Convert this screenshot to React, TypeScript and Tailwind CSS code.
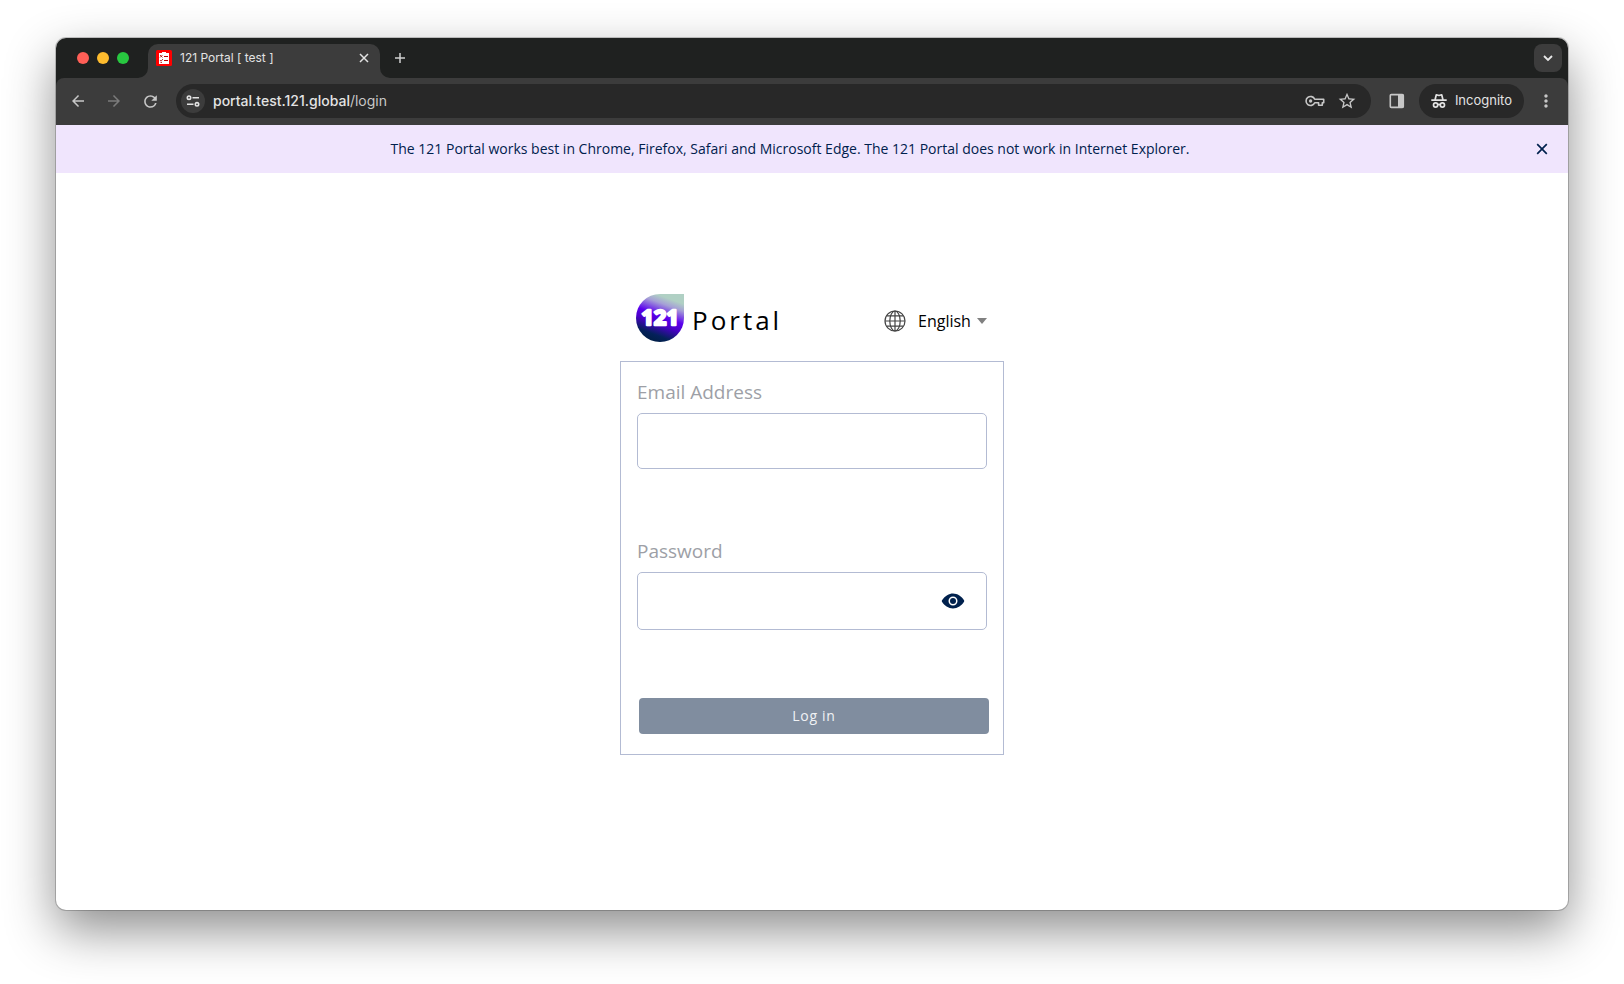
import { useState } from "react";
import { IoEye } from "react-icons/io5";
import { MdArrowBack, MdArrowForward, MdRefresh, MdMoreVert, MdStarBorder } from "react-icons/md";

function CrossIcon({ className }: { className: string }) {
  return (
    <svg viewBox="0 0 10 10" className={className} fill="none" stroke="currentColor" aria-hidden="true">
      <path d="M1 1l8 8M9 1l-8 8" />
    </svg>
  );
}

function FavIcon() {
  return (
    <svg viewBox="0 0 16 16" className="size-4 shrink-0" aria-hidden="true">
      <rect width="16" height="16" rx="1.500" fill="#f00" />
      <path d="M3 3h3V2h4v1h3v11H3z" fill="#fff" />
      <path d="M8 6.500h4M8 10.500h4" stroke="#b00" strokeWidth="1" />
      <path d="M4 5l2.500 2.500M6.500 5L4 7.500M4 10l1 1.200L7 9M4.500 12.500h1.500" stroke="#a00" strokeWidth="0.800" fill="none" />
    </svg>
  );
}

function TuneIcon() {
  return (
    <svg viewBox="0 0 14 12" className="h-3 w-3.5" fill="none" stroke="currentColor" strokeWidth="1.6" aria-hidden="true">
      <circle cx="3" cy="2.700" r="1.700" />
      <path d="M6.500 2.700H13M1 9.300h6.500" />
      <circle cx="11" cy="9.300" r="1.700" />
    </svg>
  );
}

function KeyIcon() {
  return (
    <svg viewBox="0 0 20 12" className="h-3 w-5" fill="none" stroke="currentColor" strokeWidth="1.6" aria-hidden="true">
      <path d="M9.700 4.200H18.700V7.800H17.300V10.200H13.600V7.800H9.700A4.500 4.500 0 1 1 9.700 4.200z" strokeLinejoin="round" />
      <circle cx="5.600" cy="6" r="1.700" fill="currentColor" stroke="none" />
    </svg>
  );
}

function PanelIcon() {
  return (
    <svg viewBox="0 0 16 16" className="size-4" aria-hidden="true">
      <rect x="1.300" y="1.600" width="13" height="12.800" rx="1" fill="none" stroke="currentColor" strokeWidth="1.6" />
      <path d="M9 1.600h5.500v12.800H9z" fill="currentColor" />
    </svg>
  );
}

function IncognitoIcon() {
  return (
    <svg viewBox="0 0 16 16" className="size-4" fill="none" stroke="currentColor" strokeWidth="1.700" aria-hidden="true">
      <path d="M0.300 7.100h15.400" />
      <path d="M4 7L5.300 1.800L8 2.500L10.700 1.800L12 7" strokeLinejoin="round" />
      <circle cx="4.600" cy="12" r="2.100" />
      <circle cx="11.400" cy="12" r="2.100" />
      <path d="M6.600 11.800q1.400-.8 2.800 0" />
    </svg>
  );
}

function GlobeIcon() {
  return (
    <svg viewBox="0 0 22 22" className="size-[22px]" fill="none" stroke="#444" strokeWidth="1.200" aria-hidden="true">
      <circle cx="11" cy="11" r="10" />
      <ellipse cx="11" cy="11" rx="5.200" ry="10" />
      <path d="M11 1v20M1 11h20M2.700 5.800h16.600M2.700 16.200h16.600" />
    </svg>
  );
}

function Logo() {
  return (
    <svg viewBox="0 0 48 48" className="size-12 shrink-0" role="img" aria-label="121">
      <defs>
        <linearGradient id="drop" x1="0.72" y1="0.02" x2="0.36" y2="1">
          <stop offset="0.08" stopColor="#b0d0c4" />
          <stop offset="0.22" stopColor="#a59fd6" />
          <stop offset="0.46" stopColor="#5b00ee" />
          <stop offset="0.62" stopColor="#4a00c8" />
          <stop offset="0.85" stopColor="#04215a" />
          <stop offset="1" stopColor="#001e45" />
        </linearGradient>
      </defs>
      <path d="M24 0H48V24A24 24 0 1 1 24 0z" fill="url(#drop)" />
      <text
        x="24"
        y="31"
        textAnchor="middle"
        fill="#fff"
        stroke="#fff"
        strokeWidth="2.400"
        strokeLinejoin="round"
        className="font-['Open_Sans',sans-serif] text-[22px] font-bold"
      >
        121
      </text>
    </svg>
  );
}

function TabStrip() {
  return (
    <div className="flex h-10 items-end bg-[#1f2120] pr-1.5 pl-[21px]">
      <div className="flex h-10 items-center gap-2">
        <span className="size-3 rounded-full bg-[#ff5f57]" />
        <span className="size-3 rounded-full bg-[#febc2e]" />
        <span className="size-3 rounded-full bg-[#28c840]" />
      </div>
      <svg viewBox="0 0 10 10" className="ml-[9px] size-2.5" aria-hidden="true">
        <path d="M10 0V10H0A10 10 0 0 0 10 0z" fill="#3c3c3c" />
      </svg>
      <div className="flex h-[34px] w-[232px] items-center rounded-t-[10px] bg-[#3c3c3c] pr-2 pb-1.5 pl-2">
        <FavIcon />
        <span className="ml-2 flex-1 text-xs text-[#e3e3e3]">121 Portal [ test ]</span>
        <button type="button" aria-label="Close tab" className="flex size-4 items-center justify-center text-[#e3e3e3]">
          <CrossIcon className="size-2.5 stroke-[1.500]" />
        </button>
      </div>
      <svg viewBox="0 0 10 10" className="size-2.5" aria-hidden="true">
        <path d="M0 0V10H10A10 10 0 0 1 0 0z" fill="#3c3c3c" />
      </svg>
      <button type="button" aria-label="New tab" className="flex h-10 w-5 items-center justify-center text-[#d0d0d0]">
        <svg viewBox="0 0 10 10" className="size-2.5" fill="none" stroke="currentColor" strokeWidth="1.500" aria-hidden="true">
          <path d="M5 0v10M0 5h10" />
        </svg>
      </button>
      <button
        type="button"
        aria-label="Search tabs"
        className="mb-1.5 ml-auto flex size-7 items-center justify-center rounded-lg bg-[#3c3c3c] text-[#e8e8e8]"
      >
        <svg viewBox="0 0 10 10" className="size-2.5" fill="none" stroke="currentColor" strokeWidth="1.800" aria-hidden="true">
          <path d="M1 3l4 4 4-4" />
        </svg>
      </button>
    </div>
  );
}

function Toolbar() {
  return (
    <div className="bg-[#1f2120]">
      <div className="flex h-[47px] items-center rounded-t-lg bg-[#3c3c3c] pr-3 pb-px pl-[13px] text-[#c7c7c7]">
        <div className="flex items-center gap-[18px]">
          <button type="button" aria-label="Back">
            <MdArrowBack className="size-[18px]" />
          </button>
          <button type="button" aria-label="Forward" className="text-[#7b7b7b]">
            <MdArrowForward className="size-[18px]" />
          </button>
          <button type="button" aria-label="Reload">
            <MdRefresh className="size-[19px]" />
          </button>
        </div>
        <div className="ml-4 flex h-[34px] flex-1 items-center rounded-full bg-[#282828] pr-3.5 pl-[5px]">
          <button
            type="button"
            aria-label="Site information"
            className="flex size-6 items-center justify-center rounded-full bg-[#3c3c3c] text-[#e3e3e3]"
          >
            <TuneIcon />
          </button>
          <span className="ml-2 flex-1 text-sm text-[#c7c7c7]">
            <span className="font-medium text-[#e3e3e3]">portal.test.121.global</span>/login
          </span>
          <button type="button" aria-label="Passwords">
            <KeyIcon />
          </button>
          <button type="button" aria-label="Bookmark" className="ml-3">
            <MdStarBorder className="size-5" />
          </button>
        </div>
        <button type="button" aria-label="Side panel" className="ml-[18px]">
          <PanelIcon />
        </button>
        <button
          type="button"
          className="ml-3.5 flex h-[34px] items-center gap-2 rounded-full bg-[#282828] px-3 text-[13px] text-[#e3e3e3]"
        >
          <IncognitoIcon />
          Incognito
        </button>
        <button type="button" aria-label="Menu" className="ml-3">
          <MdMoreVert className="size-5" />
        </button>
      </div>
    </div>
  );
}

function Banner({ onClose }: { onClose: () => void }) {
  return (
    <div className="flex min-h-12 items-center bg-[#f0e5fd] pr-4 text-[#00214d]">
      <p className="flex-1 pr-2 text-center text-sm">
        The 121 Portal works best in Chrome, Firefox, Safari and Microsoft Edge. The 121 Portal does not work in Internet
        Explorer.
      </p>
      <button type="button" aria-label="Close message" onClick={onClose} className="flex h-8 w-5 items-center justify-center">
        <CrossIcon className="size-3 stroke-[1.400]" />
      </button>
    </div>
  );
}

function LoginForm() {
  const [visible, setVisible] = useState(false);
  return (
    <form
      onSubmit={(event) => event.preventDefault()}
      className="flex flex-col border border-[#b3bbd3] px-4 pt-4 pb-5"
    >
      <label htmlFor="email" className="text-[19px] leading-7 text-[#9d9fa6]">
        Email Address
      </label>
      <input
        id="email"
        type="email"
        className="mt-[7px] h-14 rounded-[5px] border border-[#b3bbd3] px-4 outline-none"
      />
      <label htmlFor="password" className="mt-[68px] text-[19px] leading-7 text-[#9d9fa6]">
        Password
      </label>
      <div className="mt-[7px] flex h-[58px] items-center rounded-[5px] border border-[#b3bbd3] pr-[21px]">
        <input
          id="password"
          type={visible ? "text" : "password"}
          className="h-full min-w-0 flex-1 bg-transparent px-4 outline-none"
        />
        <button type="button" aria-label="Show password" onClick={() => setVisible(!visible)} className="text-[#00214d]">
          <IoEye className="size-6" />
        </button>
      </div>
      <button
        type="submit"
        className="mt-[68px] -mr-0.5 ml-0.5 h-9 rounded bg-[#808d9f] text-sm tracking-wider text-[#f0f2f5]"
      >
        Log in
      </button>
    </form>
  );
}

export default function App() {
  const [bannerOpen, setBannerOpen] = useState(true);
  return (
    <div className="flex min-h-screen flex-col bg-white px-14 pt-[38px] pb-[74px]">
      <div className="flex flex-1 flex-col overflow-hidden rounded-[10px] bg-white shadow-[0_0_0_1px_rgba(0,0,0,0.2),0_20px_50px_rgba(0,0,0,0.45)]">
        <header className="font-['Inter',sans-serif]">
          <TabStrip />
          <Toolbar />
        </header>
        <div className="flex flex-1 flex-col font-['Open_Sans',sans-serif]">
          {bannerOpen && <Banner onClose={() => setBannerOpen(false)} />}
          <main className="mx-auto w-full max-w-96 pt-[121px] pb-8">
            <div className="mb-[19px] flex h-12 items-center pr-[17px] pl-4">
              <Logo />
              <h1 className="mt-1 ml-2 text-[26px] leading-9 tracking-[3px] text-black">Portal</h1>
              <div className="mt-1.5 ml-auto flex items-center">
                <label htmlFor="language" aria-label="Language" className="mr-3">
                  <GlobeIcon />
                </label>
                <select id="language" className="appearance-none bg-transparent text-base text-black outline-none">
                  <option>English</option>
                </select>
                <svg viewBox="0 0 10 6" className="ml-1.5 h-1.5 w-2.5" aria-hidden="true">
                  <path d="M0 0h10L5 6z" fill="#808080" />
                </svg>
              </div>
            </div>
            <LoginForm />
          </main>
        </div>
      </div>
    </div>
  );
}
